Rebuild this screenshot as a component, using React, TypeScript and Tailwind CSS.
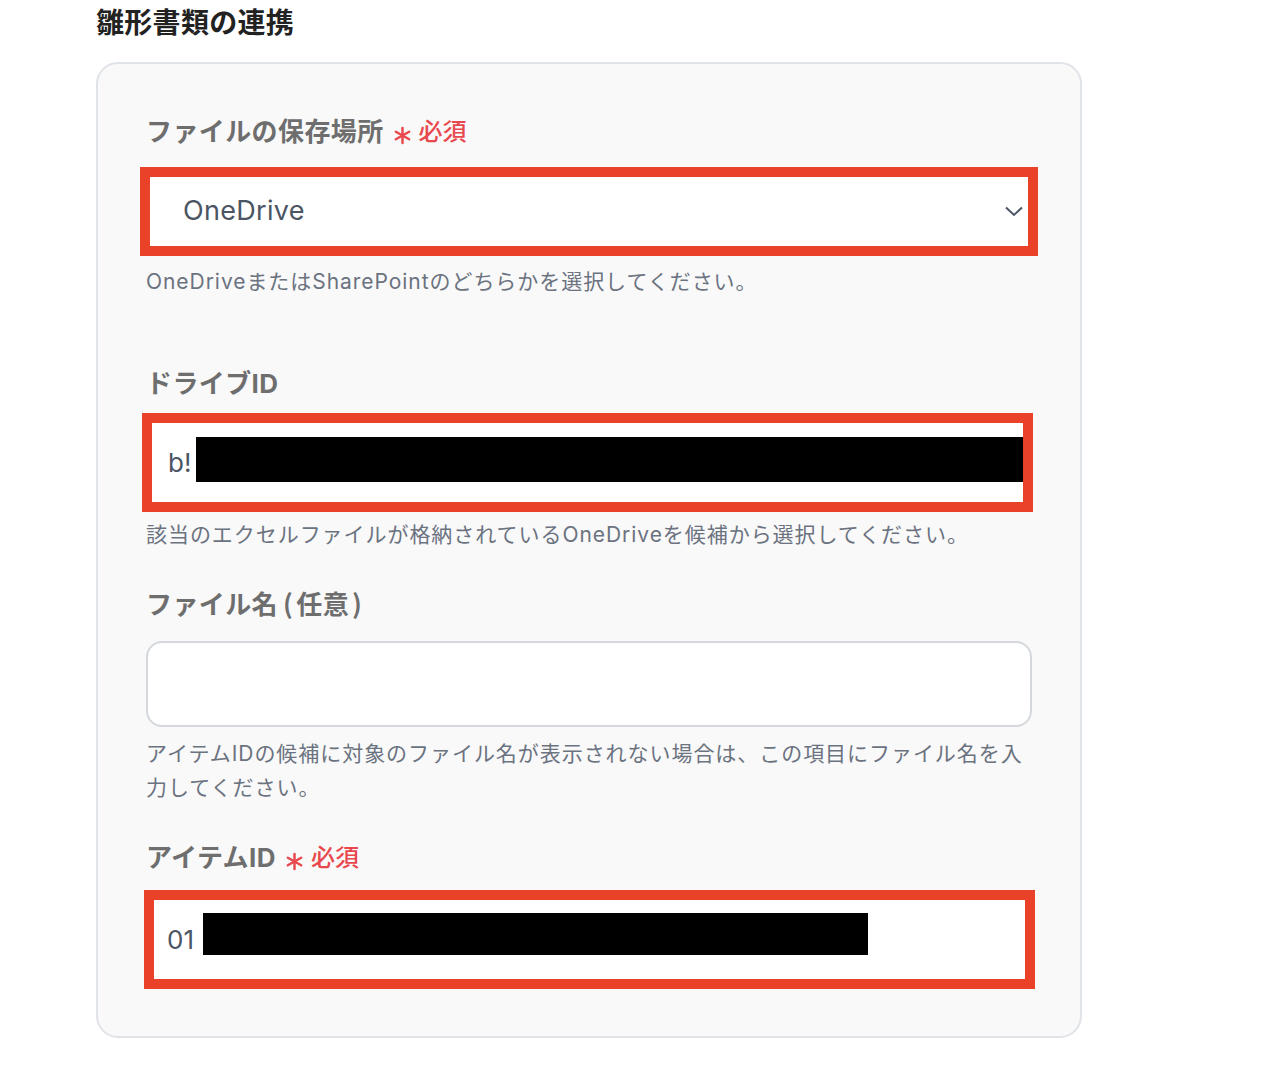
import React from "react";

const font = { fontFamily: '"Inter", "Noto Sans CJK JP", sans-serif' };

function Req() {
  return (
    <span className="ml-[9px] flex items-center text-[#e8474d]">
      <svg width="19" height="19" viewBox="0 0 20 20" className="mt-[6px]">
        <g stroke="#e8474d" strokeWidth="2.6" strokeLinecap="round">
          <line x1="10" y1="2" x2="10" y2="18" />
          <line x1="3" y1="6" x2="17" y2="14" />
          <line x1="3" y1="14" x2="17" y2="6" />
        </g>
      </svg>
      <span className="ml-[7px] text-[24px] font-medium leading-[36px]">必須</span>
    </span>
  );
}

function Label({ children, req }: { children: React.ReactNode; req?: boolean }) {
  return (
    <div className="flex h-[36px] items-center">
      <span className="text-[26px] font-bold leading-[36px] tracking-[0.4px] text-[#6e6e6e]">{children}</span>
      {req && <Req />}
    </div>
  );
}

function Help({ children }: { children: React.ReactNode }) {
  return <p className="text-[21px] leading-[34px] tracking-[0.95px] text-[#6b7280]">{children}</p>;
}

export default function App() {
  return (
    <div className="min-h-[1070px] w-[1264px] bg-white pl-[96px]" style={font}>
      <h1 className="pt-[3px] text-[28px] font-bold leading-[40px] tracking-[0.3px] text-[#222222]">雛形書類の連携</h1>
      <div className="mt-[19px] w-[986px] rounded-[22px] border-2 border-[#e0e3e7] bg-[#f9f9f9] px-[48px] pb-[47px] pt-[50px]">
        <Label req>ファイルの保存場所</Label>
        <div className="ml-[-6px] mt-[17px] flex h-[89px] w-[898px] items-center justify-between border-[10px] border-[#ea4228] bg-white pl-[33px] pr-[5px]">
          <span className="text-[27px] tracking-[0.3px] text-[#4b5563]">OneDrive</span>
          <svg width="18" height="11" viewBox="0 0 18 11">
            <path d="M1 1.5 L9 9 L17 1.5" fill="none" stroke="#4b5563" strokeWidth="2" />
          </svg>
        </div>
        <div className="mt-[9px]">
          <Help>OneDriveまたはSharePointのどちらかを選択してください。</Help>
        </div>

        <div className="mt-[67px]">
          <Label>ドライブID</Label>
        </div>
        <div className="ml-[-4px] mt-[11px] flex h-[99px] w-[891px] items-center border-[10px] border-[#ea4228] bg-white pl-[16px]">
          <span className="text-[26px] text-[#4b5563]">b!</span>
          <div className="mb-[6px] ml-[5px] h-[45px] flex-1 bg-black" />
        </div>
        <div className="mt-[6px]">
          <Help>該当のエクセルファイルが格納されているOneDriveを候補から選択してください。</Help>
        </div>

        <div className="mt-[34px]">
          <Label>
            ファイル名
            <span className="ml-[5px] mr-[3px]" style={{ fontFamily: '"Noto Sans CJK JP", sans-serif' }}>(</span>
            任意
            <span className="ml-[3px]" style={{ fontFamily: '"Noto Sans CJK JP", sans-serif' }}>)</span>
          </Label>
        </div>
        <div className="mt-[19px] h-[86px] w-[886px] rounded-[16px] border-2 border-[#d4d8dd] bg-white" />
        <div className="mt-[10px]">
          <Help>アイテムIDの候補に対象のファイル名が表示されない場合は、この項目にファイル名を入力してください。</Help>
        </div>

        <div className="mt-[35px]">
          <Label req>アイテムID</Label>
        </div>
        <div className="ml-[-2px] mt-[14px] flex h-[99px] w-[891px] items-center border-[10px] border-[#ea4228] bg-white pl-[13px]">
          <span className="text-[26px] text-[#4b5563]">01</span>
          <div className="mb-[11px] ml-[9px] h-[42px] w-[665px] bg-black" />
        </div>
      </div>
    </div>
  );
}
